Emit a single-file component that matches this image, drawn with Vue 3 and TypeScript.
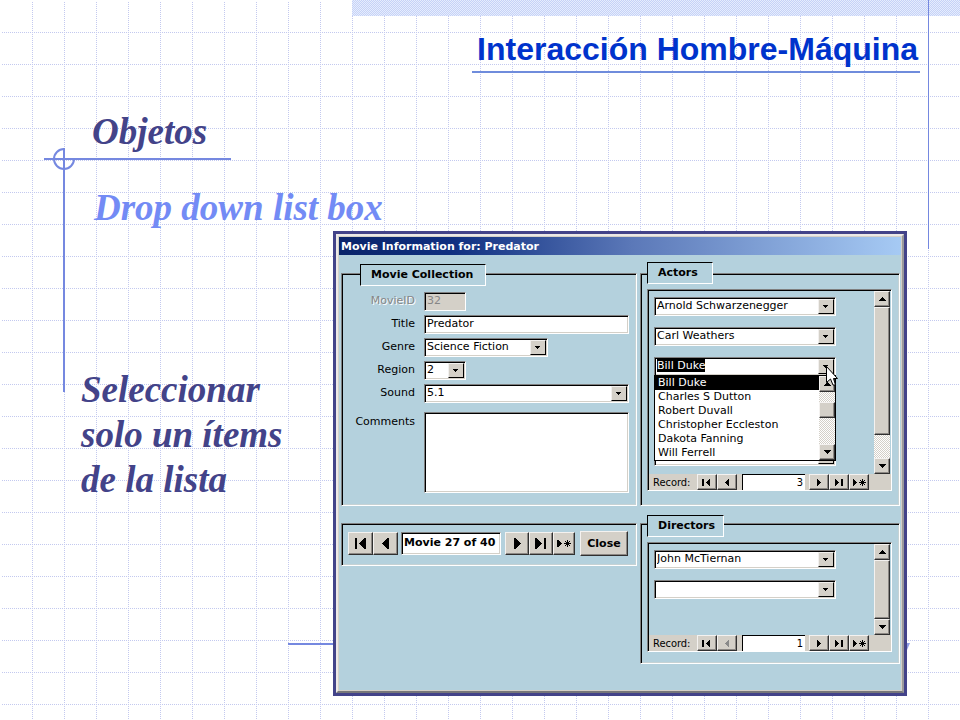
<script setup lang="ts">
import { onMounted, ref } from 'vue'

interface ComboField {
  id: string
  label: string
  value: string
  size: 'medium' | 'small' | 'full'
}

const comboFields: ComboField[] = [
  { id: 'genre', label: 'Genre', value: 'Science Fiction', size: 'medium' },
  { id: 'region', label: 'Region', value: '2', size: 'small' },
  { id: 'sound', label: 'Sound', value: '5.1', size: 'full' },
]

const actorsBefore: string[] = ['Arnold Schwarzenegger', 'Carl Weathers']
const blankActors = 3
const directors: string[] = ['John McTiernan', '']

const options: string[] = [
  'Bill Duke',
  'Charles S Dutton',
  'Robert Duvall',
  'Christopher Eccleston',
  'Dakota Fanning',
  'Will Ferrell',
]

const activeActor = ref('Bill Duke')
const actorInput = ref<HTMLInputElement | null>(null)

// Stepped triangle: its flat edge is at x, `half` columns grow from the tip, `base` is the flat edge's thickness.
function triangle(x: number, middle: number, half: number, dir: 1 | -1, base = 1): string {
  let d = `M${x} ${middle - half + 1}v${half * 2 - 1}h${dir * base}`
  for (let i = 1; i < half; i++) d += `v-1h${dir}`
  for (let i = 1; i < half; i++) d += `v-1h${-dir}`
  return d + 'v-1z'
}

const prevStep = triangle(8, 4, 4, -1)
const firstStep = 'M1 1h2v7h-2z' + triangle(9, 4, 4, -1)
const nextStep = triangle(4, 4, 4, 1)
const lastStep = triangle(2, 4, 4, 1) + 'M8 1h2v7h-2z'
const newStep = triangle(1, 4, 4, 1)

const prevMove = triangle(10, 6, 6, -1, 2)
const firstMove = 'M1 1h2v11h-2z' + triangle(12, 6, 6, -1, 2)
const nextMove = triangle(4, 6, 6, 1, 2)
const lastMove = triangle(1, 6, 6, 1, 2) + 'M10 1h2v11h-2z'
const newMove = triangle(0, 6, 4, 1, 2)

onMounted(() => {
  actorInput.value?.focus()
  actorInput.value?.select()
})
</script>

<template>
  <div class="slide">
    <svg class="backdrop" aria-hidden="true">
      <defs>
        <pattern id="dotted-grid" width="32" height="32" patternUnits="userSpaceOnUse">
          <path d="M.5 0V32M0 .5H32" stroke="#c3c9ef" stroke-dasharray="1 1" fill="none" />
        </pattern>
      </defs>
      <rect x="1" y="1" width="100%" height="100%" fill="url(#dotted-grid)" />
    </svg>
    <svg class="corner" width="190" height="250" aria-hidden="true">
      <path d="M0 15H187M20 4V248" stroke="#7588e0" stroke-width="2" fill="none" />
      <path d="M20 5A10 10 0 1 0 30 15" stroke="#7588e0" stroke-width="2" fill="none" />
    </svg>
    <span class="right-rule"></span>
    <svg class="foot-rule" width="624" height="12" aria-hidden="true">
      <path d="M0 2H620" stroke="#7588e0" stroke-width="2" />
      <path d="M618 1H622L619 8H618Z" fill="#8f9ee6" />
    </svg>

    <header class="top">
      <div class="band"></div>
      <h1>Interacción Hombre-Máquina</h1>
    </header>

    <h2 class="topic">Objetos</h2>
    <h3 class="subtopic">Drop down list box</h3>

    <main class="content">
      <p class="note">Seleccionar solo un ítems de la lista</p>

      <section class="dialog" aria-label="Movie Information">
        <div class="window">
          <div class="titlebar">Movie Information for: Predator</div>
          <div class="body">
            <section class="frame">
              <h4 class="tab inset-tab">Movie Collection</h4>
              <form class="form" @submit.prevent>
                <label for="movie-id" class="off">MovieID</label>
                <input id="movie-id" class="box small off-box" value="32" disabled />
                <label for="title">Title</label>
                <input id="title" class="box" value="Predator" />
                <template v-for="f in comboFields" :key="f.id">
                  <label :for="f.id">{{ f.label }}</label>
                  <span class="combo" :class="f.size">
                    <select :id="f.id" class="box">
                      <option>{{ f.value }}</option>
                    </select>
                    <svg class="drop" viewBox="0 0 16 15"><path d="M5 6h5v1h-1v1h-1v1h-1v-1h-1v-1h-1z" /></svg>
                  </span>
                </template>
                <label for="comments" class="comments-label">Comments</label>
                <textarea id="comments" class="box comments"></textarea>
              </form>
            </section>

            <section class="frame">
              <h4 class="tab">Actors</h4>
              <div class="panel">
                <div class="scroller">
                  <div class="list">
                    <span v-for="a in actorsBefore" :key="a" class="combo">
                      <select class="box" :aria-label="a">
                        <option>{{ a }}</option>
                      </select>
                      <svg class="drop" viewBox="0 0 16 15"><path d="M5 6h5v1h-1v1h-1v1h-1v-1h-1v-1h-1z" /></svg>
                    </span>
                    <span class="combo open">
                      <input
                        ref="actorInput"
                        v-model="activeActor"
                        class="box"
                        role="combobox"
                        aria-label="Actor"
                        aria-expanded="true"
                        aria-controls="actor-options"
                      />
                      <svg class="drop" viewBox="0 0 16 15"><path d="M5 6h5v1h-1v1h-1v1h-1v-1h-1v-1h-1z" /></svg>
                      <div class="popup">
                        <ul id="actor-options" role="listbox" aria-label="Actors">
                          <li
                            v-for="o in options"
                            :key="o"
                            role="option"
                            :aria-selected="o === activeActor"
                            @click="activeActor = o"
                          >{{ o }}</li>
                        </ul>
                        <div class="scrollbar">
                          <button type="button" class="key" aria-label="Up"><svg viewBox="0 0 7 4"><path d="M3 0h1v1h1v1h1v1h1v1h-7v-1h1v-1h1v-1h1z" /></svg></button>
                          <span class="track short"></span>
                          <span class="thumb fixed"></span>
                          <span class="track"></span>
                          <button type="button" class="key" aria-label="Down"><svg viewBox="0 0 7 4"><path d="M0 0h7v1h-1v1h-1v1h-1v1h-1v-1h-1v-1h-1v-1h-1z" /></svg></button>
                        </div>
                      </div>
                      <svg class="cursor" viewBox="0 0 12 20" aria-hidden="true">
                        <path d="M.5 .5V16.500L4.500 13L7 19H9.500L7.500 12.500H11.500Z" fill="#fff" stroke="#000" />
                      </svg>
                    </span>
                    <span v-for="n in blankActors" :key="n" class="combo">
                      <select class="box" :aria-label="`Actor ${n + 3}`"><option></option></select>
                      <svg class="drop" viewBox="0 0 16 15"><path d="M5 6h5v1h-1v1h-1v1h-1v-1h-1v-1h-1z" /></svg>
                    </span>
                  </div>
                  <div class="scrollbar">
                    <button type="button" class="key" aria-label="Up"><svg viewBox="0 0 7 4"><path d="M3 0h1v1h1v1h1v1h1v1h-7v-1h1v-1h1v-1h1z" /></svg></button>
                    <span class="thumb"></span>
                    <span class="track rest"></span>
                    <button type="button" class="key" aria-label="Down"><svg viewBox="0 0 7 4"><path d="M0 0h7v1h-1v1h-1v1h-1v1h-1v-1h-1v-1h-1v-1h-1z" /></svg></button>
                  </div>
                </div>
                <div class="record">
                  <label for="actor-record">Record:</label>
                  <button type="button" class="step" aria-label="First"><svg viewBox="0 0 12 9"><path :d="firstStep" /></svg></button>
                  <button type="button" class="step" aria-label="Previous"><svg viewBox="0 0 12 9"><path :d="prevStep" /></svg></button>
                  <input id="actor-record" class="number" value="3" />
                  <button type="button" class="step" aria-label="Next"><svg viewBox="0 0 12 9"><path :d="nextStep" /></svg></button>
                  <button type="button" class="step" aria-label="Last"><svg viewBox="0 0 12 9"><path :d="lastStep" /></svg></button>
                  <button type="button" class="step" aria-label="New"><svg class="wide" viewBox="0 0 14 9"><path :d="newStep" /><path d="M10.500 1v7M7 4.500h7M8 2l5 5M13 2l-5 5" stroke="#000" /></svg></button>
                </div>
              </div>
            </section>

            <section class="frame nav">
              <div class="pair wide-pair">
                <button type="button" class="move" aria-label="First movie"><svg viewBox="0 0 14 13"><path :d="firstMove" /></svg></button>
                <button type="button" class="move" aria-label="Previous movie"><svg viewBox="0 0 14 13"><path :d="prevMove" /></svg></button>
              </div>
              <input class="box position" value="Movie 27 of 40" aria-label="Movie position" />
              <div class="pair">
                <button type="button" class="move" aria-label="Next movie"><svg viewBox="0 0 14 13"><path :d="nextMove" /></svg></button>
                <button type="button" class="move" aria-label="Last movie"><svg viewBox="0 0 14 13"><path :d="lastMove" /></svg></button>
                <button type="button" class="move narrow" aria-label="New movie"><svg viewBox="0 0 14 13"><path :d="newMove" /><path d="M10.500 3v7M7 6.500h7M8 4l5 5M13 4l-5 5" stroke="#000" /></svg></button>
              </div>
              <button type="button" class="close">Close</button>
            </section>

            <section class="frame directors">
              <h4 class="tab">Directors</h4>
              <div class="panel">
                <div class="scroller">
                  <div class="list">
                    <span v-for="(d, i) in directors" :key="i" class="combo">
                      <select class="box" :aria-label="`Director ${i + 1}`">
                        <option>{{ d }}</option>
                      </select>
                      <svg class="drop" viewBox="0 0 16 15"><path d="M5 6h5v1h-1v1h-1v1h-1v-1h-1v-1h-1z" /></svg>
                    </span>
                  </div>
                  <div class="scrollbar">
                    <button type="button" class="key" aria-label="Up"><svg viewBox="0 0 7 4"><path d="M3 0h1v1h1v1h1v1h1v1h-7v-1h1v-1h1v-1h1z" /></svg></button>
                    <span class="thumb"></span>
                    <button type="button" class="key" aria-label="Down"><svg viewBox="0 0 7 4"><path d="M0 0h7v1h-1v1h-1v1h-1v1h-1v-1h-1v-1h-1v-1h-1z" /></svg></button>
                  </div>
                </div>
                <div class="record">
                  <label for="director-record">Record:</label>
                  <button type="button" class="step" aria-label="First"><svg viewBox="0 0 12 9"><path :d="firstStep" /></svg></button>
                  <button type="button" class="step" aria-label="Previous" disabled><svg viewBox="0 0 12 9"><path :d="prevStep" /></svg></button>
                  <input id="director-record" class="number" value="1" />
                  <button type="button" class="step" aria-label="Next"><svg viewBox="0 0 12 9"><path :d="nextStep" /></svg></button>
                  <button type="button" class="step" aria-label="Last"><svg viewBox="0 0 12 9"><path :d="lastStep" /></svg></button>
                  <button type="button" class="step" aria-label="New"><svg class="wide" viewBox="0 0 14 9"><path :d="newStep" /><path d="M10.500 1v7M7 4.500h7M8 2l5 5M13 2l-5 5" stroke="#000" /></svg></button>
                </div>
              </div>
            </section>
          </div>
        </div>
      </section>
    </main>
  </div>
</template>

<style>
body {
  background: #fff;
}
</style>

<style scoped>
*,
*::before,
*::after {
  box-sizing: border-box;
}

.slide {
  --ink: #434389;
  --rule: #7588e0;
  --sky: #b4d1dd;
  --face: #d4d0c8;
  position: relative;
  min-height: 100vh;
  overflow: hidden;
  color: #000;
  font: 11px/13px 'DejaVu Sans', Verdana, sans-serif;
}

h1,
h2,
h3,
h4,
p,
ul {
  margin: 0;
  padding: 0;
}

input,
select,
textarea,
button {
  margin: 0;
  padding: 0;
  border: 0;
  border-radius: 0;
  outline: 0;
  color: inherit;
  font: inherit;
}

/* backdrop */
.backdrop {
  position: absolute;
  inset: 0;
  width: 100%;
  height: 100%;
  shape-rendering: crispEdges;
}

.corner {
  position: absolute;
  left: 44px;
  top: 144px;
}

.right-rule {
  position: absolute;
  right: 31px;
  top: 0;
  width: 1px;
  height: 249px;
  background: var(--rule);
  z-index: 1;
}

.foot-rule {
  position: absolute;
  left: 288px;
  top: 642px;
}

/* headings */
.top,
.topic,
.subtopic,
.content {
  position: relative;
}

.band {
  height: 16px;
  margin-left: 352px;
  background: repeating-conic-gradient(#c6d2f7 0 25%, #e6edfd 0 50%) 0 0 / 2px 2px;
}

h1 {
  width: fit-content;
  margin: 15px 40px 0 auto;
  padding: 0 2px 4px 5px;
  border-bottom: 2px solid #6f8cdc;
  color: #0033cc;
  font: bold 32px/36px 'Liberation Sans', Arial, sans-serif;
}

.topic,
.subtopic,
.note {
  color: var(--ink);
  font: italic bold 37px/45px 'Liberation Serif', 'Times New Roman', serif;
}

.topic {
  margin-top: 36px;
  padding-left: 92px;
}

.subtopic {
  margin-top: 31px;
  padding-left: 94px;
  color: #738bf5;
}

.content {
  display: grid;
  grid-template-columns: 333px minmax(0, 1fr);
  align-items: start;
  margin-top: 1px;
  padding-right: 53px;
  padding-bottom: 24px;
}

.note {
  padding: 136px 20px 0 81px;
}

/* dialog window */
.dialog {
  border: 3px solid var(--ink);
}

.window {
  padding: 1px;
  border: 2px solid;
  border-color: #ece9e6 #9a9a9c #77777a #ece9e6;
  background: var(--face);
}

.titlebar {
  padding: 3px 2px 2px;
  background: linear-gradient(90deg, #0a246a, #0f2f80 20%, #5b78b8 52%, #a6caf4);
  color: #fff;
  font-weight: bold;
}

.body {
  display: grid;
  grid-template-columns: 296fr 260fr;
  grid-template-rows: auto auto;
  gap: 17px 3px;
  padding: 18px 1px 26px 2px;
  background: var(--sky);
}

.frame {
  border: 1px solid;
  border-color: #808080 #fff #fff #808080;
  box-shadow: inset 1px 1px #000, inset -1px -1px #c6d2d4;
  min-width: 0;
}

.tab {
  width: fit-content;
  min-width: 66px;
  margin: -12px 0 0 6px;
  padding: 3px 8px 4px 10px;
  border: 1px solid;
  border-color: #000 #fff #fff #000;
  background: var(--sky);
  font-weight: bold;
}

.inset-tab {
  margin: -10px 0 0 18px;
  padding-right: 12px;
}

.directors .tab {
  margin-top: -9px;
}

/* sunken entry boxes */
.box {
  width: 100%;
  height: 19px;
  padding: 0 2px 2px;
  border: 1px solid;
  border-color: #808080 #fff #fff #808080;
  background: #fff;
  box-shadow: inset 1px 1px #000, inset -1px -1px #d4d0c8;
  appearance: none;
}

.form {
  display: grid;
  grid-template-columns: 73px minmax(0, 1fr);
  gap: 4px 9px;
  align-items: center;
  padding: 6px 7px 11px 0;
}

.form label {
  padding-bottom: 2px;
  text-align: right;
}

.form .off {
  color: #868686;
  text-shadow: 1px 1px #fff;
}

.small {
  width: 42px;
}

.medium {
  width: 124px;
}

.off-box {
  background: #d4d0c8;
  color: #868686;
}

.form .comments-label {
  align-self: start;
  padding-top: 8px;
}

.comments {
  height: 81px;
  margin-top: 5px;
  resize: none;
}

/* drop-down boxes */
.combo {
  position: relative;
  display: grid;
  align-items: center;
}

.combo .box,
.combo .drop {
  grid-area: 1 / 1;
}

.drop {
  width: 16px;
  height: 15px;
  justify-self: end;
  margin-right: 2px;
  border: 1px solid;
  border-color: #f2f0ee #000 #000 #f2f0ee;
  background: var(--face);
  pointer-events: none;
  position: relative;
}

svg {
  display: block;
  shape-rendering: crispEdges;
}

.corner,
.foot-rule,
.cursor {
  shape-rendering: auto;
}

.open {
  z-index: 2;
}

.open .box::selection {
  background: #000;
  color: #fff;
}

.popup {
  position: absolute;
  left: 0;
  right: 0;
  top: 18px;
  display: flex;
  border: 1px solid #000;
  background: #fff;
}

.popup ul {
  flex: 1;
  list-style: none;
}

.popup li {
  padding-left: 3px;
  line-height: 14px;
}

.popup li[aria-selected='true'] {
  background: #000;
  color: #fff;
}

.cursor {
  position: absolute;
  right: -2px;
  top: 9px;
  width: 12px;
  height: 20px;
}

/* sub-panels */
.panel {
  margin: 5px 7px 14px 6px;
  border: 1px solid;
  border-color: #808080 #fff #fff #808080;
  box-shadow: inset 1px 1px #000;
}

.directors .panel {
  margin-bottom: 11px;
}

.scroller {
  display: flex;
  justify-content: space-between;
  padding: 1px 1px 0 6px;
}

.list {
  display: grid;
  flex: 0 1 182px;
  gap: 11px;
  padding: 6px 0 8px;
}

.directors .list {
  padding-bottom: 36px;
}

.scrollbar {
  display: flex;
  flex: 0 0 16px;
  flex-direction: column;
}

.key {
  display: grid;
  place-items: center;
  flex: 0 0 16px;
}

.key svg {
  width: 7px;
  height: 4px;
}

.key,
.thumb,
.step,
.move,
.close {
  border: 1px solid;
  border-color: #f4f2f0 #303030 #303030 #f4f2f0;
  background: var(--face);
  box-shadow: inset -1px -1px #8c8884;
}

.thumb {
  flex: 1;
}

.thumb.fixed {
  flex: 0 0 16px;
}

.track {
  flex: 1;
  background: repeating-conic-gradient(#d4d0c8 0 25%, #fff 0 50%) 0 0 / 2px 2px;
}

.track.short {
  flex: 0 0 10px;
}

.track.rest {
  flex: 0 0 23px;
}

.record {
  display: flex;
  align-items: center;
  margin-left: 1px;
  padding-left: 4px;
  background: var(--face);
  font-family: 'DejaVu Sans Condensed', 'DejaVu Sans', Tahoma, sans-serif;
}

.record label {
  flex: 0 0 44px;
}

.step {
  display: grid;
  place-items: center;
  flex: 0 0 20px;
  height: 16px;
}

.step svg {
  width: 12px;
  height: 9px;
}

.step .wide {
  width: 14px;
}

.step:disabled svg {
  fill: #8a8a8a;
}

.number {
  flex: 0 1 63px;
  min-width: 0;
  height: 16px;
  margin: 0 4px 0 5px;
  padding-right: 2px;
  background: #fff;
  box-shadow: inset 1px 1px #000;
  text-align: right;
}

/* movie navigation */
.nav {
  display: flex;
  align-items: center;
  align-self: start;
  padding: 7px 8px 9px 6px;
  font-weight: bold;
}

.pair {
  display: flex;
}

.move {
  display: grid;
  place-items: center;
  width: 24px;
  height: 23px;
}

.wide-pair .move {
  width: 25px;
}

.move.narrow {
  width: 22px;
}

.move svg {
  width: 14px;
  height: 13px;
}

.nav .position {
  flex: 1;
  min-width: 0;
  height: 23px;
  margin: 0 4px 0 3px;
  font-weight: bold;
}

.close {
  width: 48px;
  height: 25px;
  margin-left: 5px;
}
</style>
